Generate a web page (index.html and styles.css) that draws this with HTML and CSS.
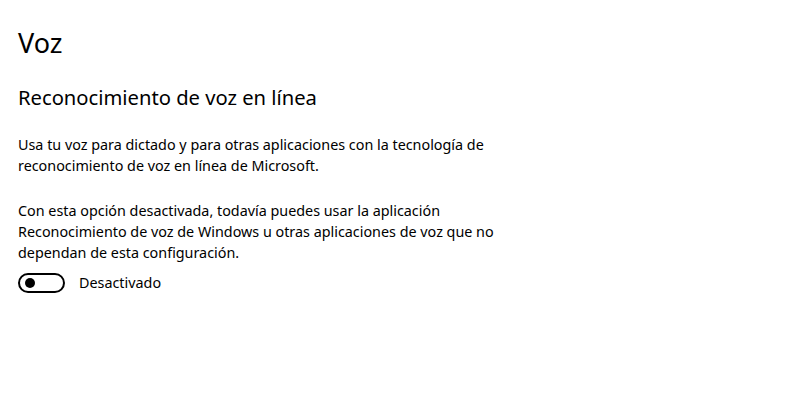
FILE: index.html
```html
<!DOCTYPE html>
<html lang="es">
<head>
<meta charset="utf-8">
<link rel="stylesheet" href="styles.css">
</head>
<body>
<main class="page">
  <h1 class="title">Voz</h1>
  <h2 class="section">Reconocimiento de voz en línea</h2>
  <p class="text">Usa tu voz para dictado y para otras aplicaciones con la tecnología de<br>reconocimiento de voz en línea de Microsoft.</p>
  <p class="text">Con esta opción desactivada, todavía puedes usar la aplicación<br>Reconocimiento de voz de Windows u otras aplicaciones de voz que no<br>dependan de esta configuración.</p>
  <div class="toggle-row">
    <span class="toggle"><span class="knob"></span></span>
    <span class="toggle-label">Desactivado</span>
  </div>
</main>
</body>
</html>
```
FILE: styles.css
```css
html, body {
  margin: 0;
  padding: 0;
  background: #ffffff;
}
body {
  width: 800px;
  height: 401px;
  overflow: hidden;
  font-family: "Noto Sans", "Open Sans", sans-serif;
  color: #000000;
}
.page {
  padding: 24px 0 0 18px;
}
.title {
  margin: 0;
  font-size: 27px;
  font-weight: 400;
  line-height: 38px;
}
.section {
  margin: 20px 0 0 0;
  font-size: 20.2px;
  font-weight: 400;
  line-height: 30px;
}
.text {
  margin: 22px 0 0 0;
  font-size: 14.35px;
  line-height: 21px;
}
.text + .text {
  margin-top: 24px;
}
.toggle-row {
  display: flex;
  align-items: center;
  gap: 14px;
  margin-top: 9px;
}
.toggle {
  box-sizing: border-box;
  width: 47px;
  height: 20px;
  border: 2px solid #000;
  border-radius: 10px;
  display: flex;
  align-items: center;
  padding-left: 5px;
}
.knob {
  width: 10px;
  height: 10px;
  border-radius: 50%;
  background: #000;
}
.toggle-label {
  font-size: 14.35px;
  line-height: 21px;
}
```
